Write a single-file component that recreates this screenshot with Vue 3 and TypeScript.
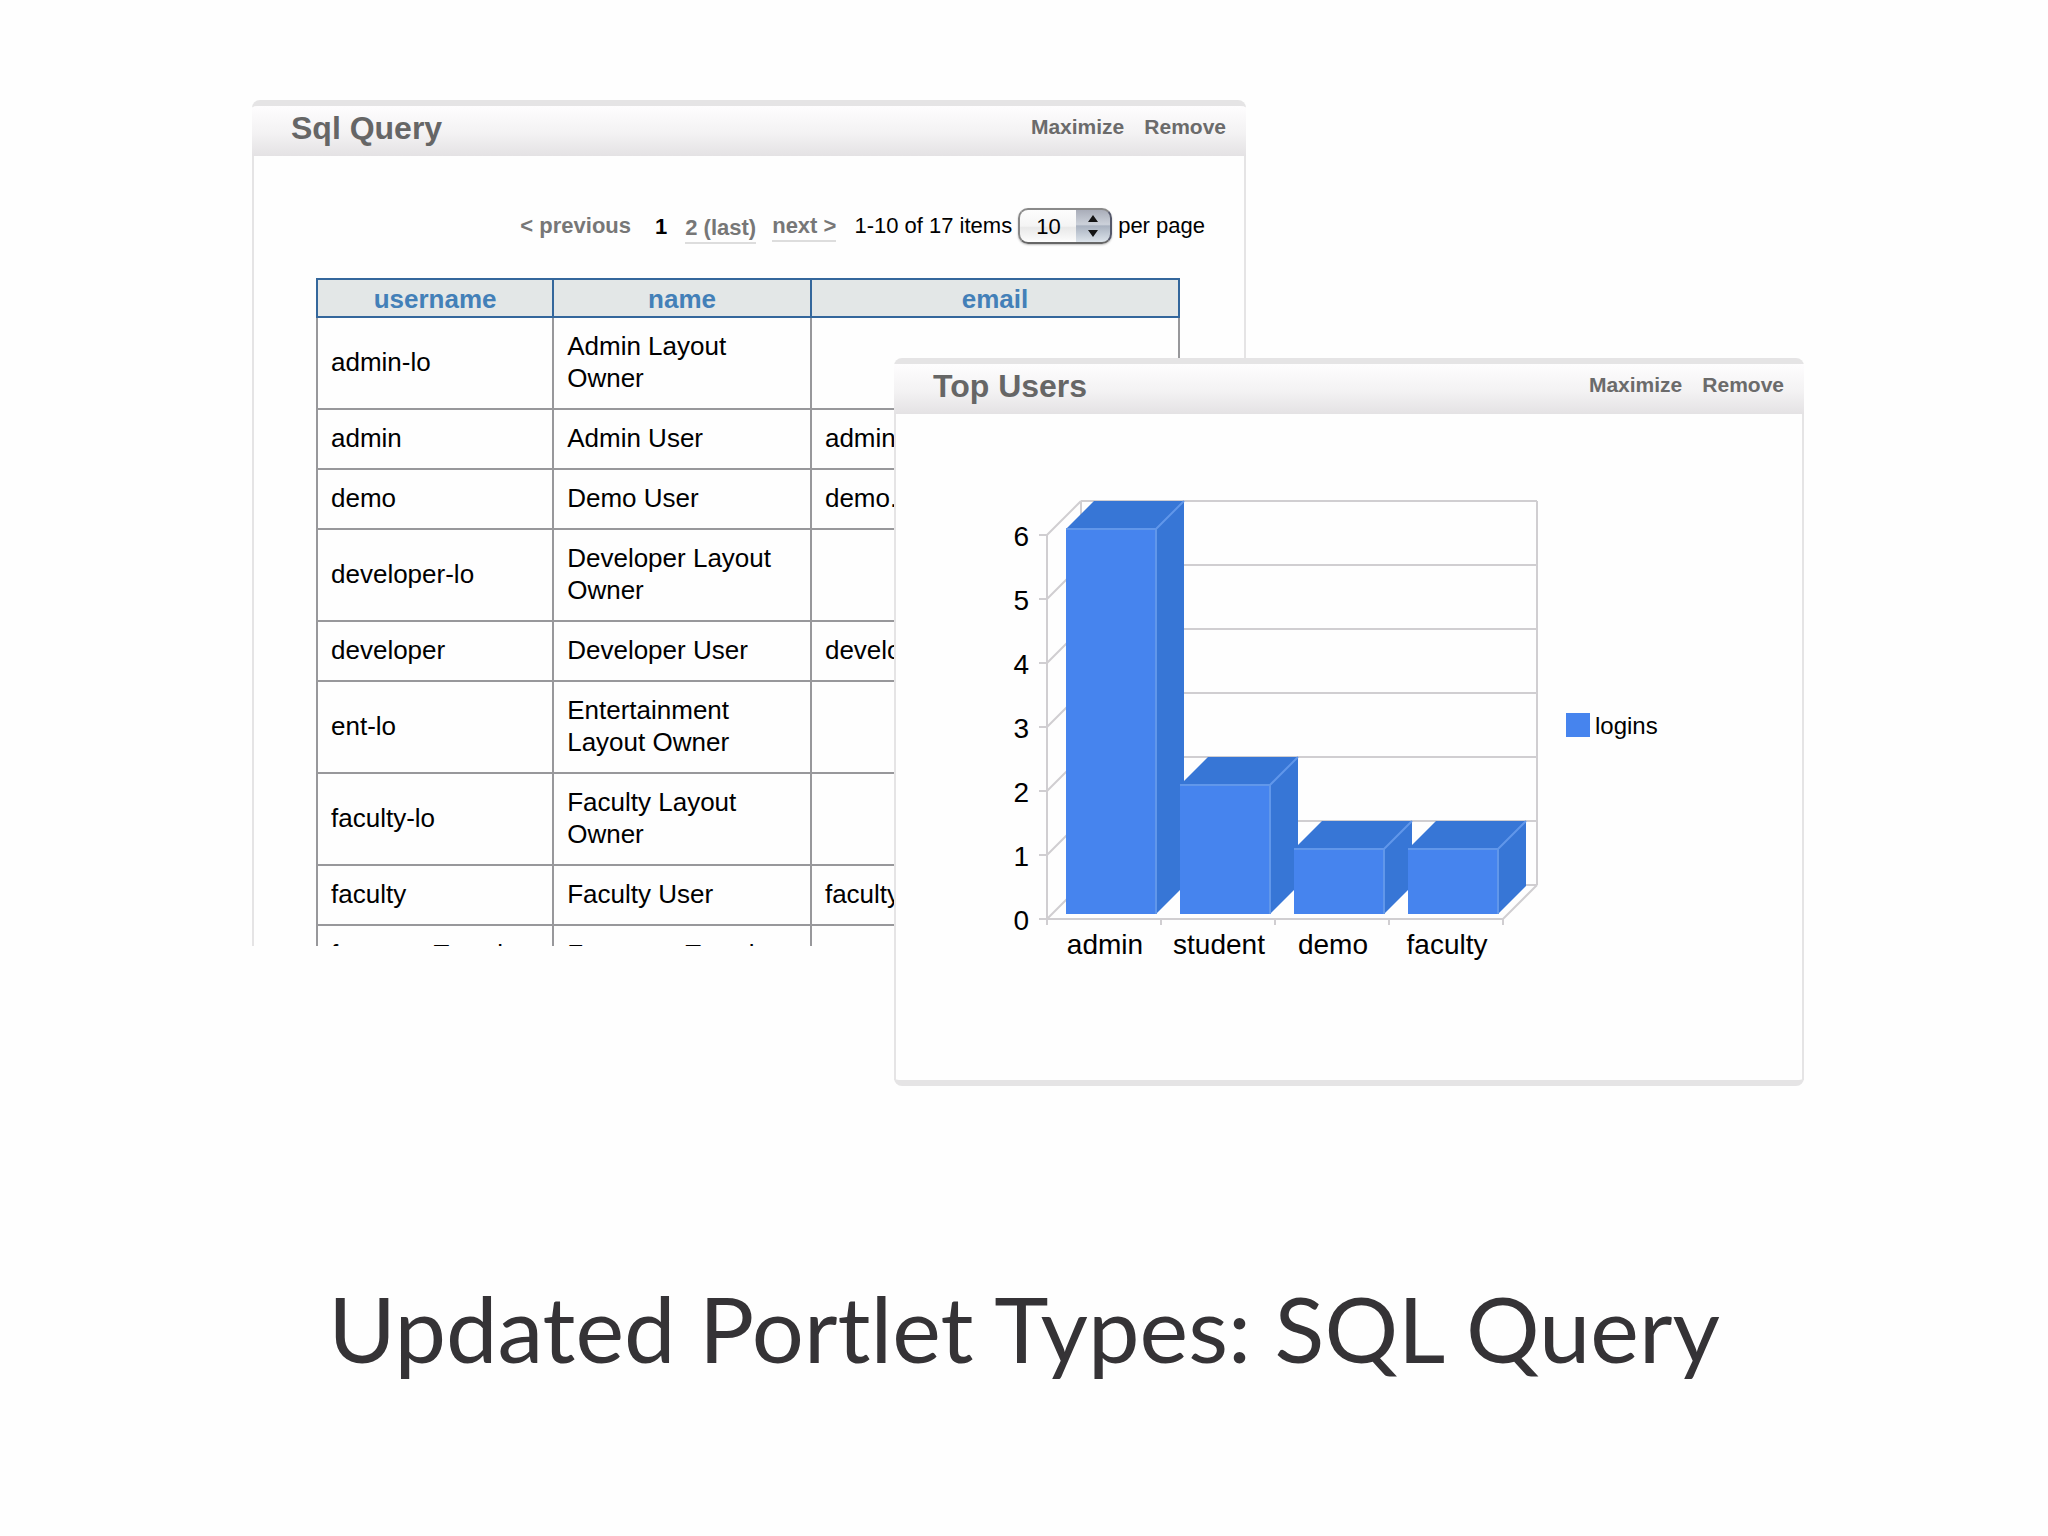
<script setup lang="ts">
import { ref } from 'vue'

interface UserRow {
  username: string
  name: string
  email: string
}

interface Bar {
  label: string
  value: number
}

const pageSize = ref<number>(10)

const rows: UserRow[] = [
  { username: 'admin-lo', name: 'Admin Layout Owner', email: '' },
  { username: 'admin', name: 'Admin User', email: 'admin' },
  { username: 'demo', name: 'Demo User', email: 'demo.' },
  { username: 'developer-lo', name: 'Developer Layout Owner', email: '' },
  { username: 'developer', name: 'Developer User', email: 'develo' },
  { username: 'ent-lo', name: 'Entertainment Layout Owner', email: '' },
  { username: 'faculty-lo', name: 'Faculty Layout Owner', email: '' },
  { username: 'faculty', name: 'Faculty User', email: 'faculty' },
  { username: 'fragmentTemplate', name: 'Fragment Template', email: '' },
]

const bars: Bar[] = [
  { label: 'admin', value: 6 },
  { label: 'student', value: 2 },
  { label: 'demo', value: 1 },
  { label: 'faculty', value: 1 },
]

// Chart geometry: the front plane sits 34 units left of and below the back wall.
const unit = 64
const zeroY = 423
const wallDepth = 34
const ticks = [0, 1, 2, 3, 4, 5, 6]
const slot = 114
const barWidth = 90
const barDepth = 28
const barBase = 418

const frontY = (v: number): number => zeroY - v * unit
const backY = (v: number): number => frontY(v) - wallDepth
const barX = (i: number): number => 52 + i * slot
const barTop = (v: number): number => barBase - 1 - v * unit

const topFace = (i: number, v: number): string => {
  const x = barX(i)
  const y = barTop(v)
  return `${x},${y} ${x + barDepth},${y - barDepth} ${x + barWidth + barDepth},${y - barDepth} ${x + barWidth},${y}`
}

const sideFace = (i: number, v: number): string => {
  const x = barX(i) + barWidth
  const y = barTop(v)
  return `${x},${y} ${x + barDepth},${y - barDepth} ${x + barDepth},${barBase - barDepth} ${x},${barBase}`
}
</script>

<template>
  <main class="slide">
    <div class="stage">
      <section class="portlet query">
        <header class="bar">
          <h2>Sql Query</h2>
          <nav class="actions">
            <a href="#">Maximize</a>
            <a href="#">Remove</a>
          </nav>
        </header>
        <div class="body query-body">
          <div class="pager">
            <a class="step previous">&lt; previous</a>
            <span class="pages">
              <span class="current">1</span>
              <a class="step linked" href="#">2 (last)</a>
            </span>
            <a class="step linked" href="#">next &gt;</a>
            <span class="size">
              <span>1-10 of 17 items</span>
              <span class="picker">
                <select id="page-size" v-model="pageSize">
                  <option :value="10">10</option>
                </select>
                <svg viewBox="0 0 34 32" aria-hidden="true">
                  <path d="M17 5l5 7h-10z M17 27l5-7h-10z" />
                </svg>
              </span>
              <label for="page-size">per page</label>
            </span>
          </div>
          <table>
            <colgroup>
              <col class="col-username" />
              <col class="col-name" />
              <col />
            </colgroup>
            <thead>
              <tr>
                <th>username</th>
                <th>name</th>
                <th>email</th>
              </tr>
            </thead>
            <tbody>
              <tr v-for="row in rows" :key="row.username">
                <td>{{ row.username }}</td>
                <td>{{ row.name }}</td>
                <td>{{ row.email }}</td>
              </tr>
            </tbody>
          </table>
        </div>
      </section>

      <section class="portlet top-users">
        <header class="bar">
          <h2>Top Users</h2>
          <nav class="actions">
            <a href="#">Maximize</a>
            <a href="#">Remove</a>
          </nav>
        </header>
        <div class="body chart-body">
          <svg class="chart" viewBox="-14 0 660 472" role="img">
            <g class="grid">
              <path v-for="t in ticks" :key="`b${t}`" :d="`M67 ${backY(t)}H523`" />
              <path d="M67 5V389 M523 5V389 M33 39V429" />
              <path d="M33 423H489L523 389" />
              <path v-for="t in ticks" :key="`f${t}`" :d="`M25 ${frontY(t)}H33L67 ${backY(t)}`" />
              <path v-for="n in 4" :key="`x${n}`" :d="`M${33 + n * slot} 423v6`" />
            </g>
            <g v-for="(bar, i) in bars" :key="bar.label">
              <polygon class="shade" :points="topFace(i, bar.value)" />
              <polygon class="shade" :points="sideFace(i, bar.value)" />
              <rect
                class="face"
                :x="barX(i)"
                :y="barTop(bar.value)"
                :width="barWidth"
                :height="barBase - barTop(bar.value)"
              />
              <path
                class="edge"
                :d="`M${barX(i)} ${barTop(bar.value)}h${barWidth}V${barBase} M${barX(i) + barWidth} ${barTop(bar.value)}l${barDepth} -${barDepth}`"
              />
            </g>
            <g class="value-labels">
              <text v-for="t in ticks" :key="t" x="15" :y="frontY(t) + 11">{{ t }}</text>
            </g>
            <g class="bar-labels">
              <text v-for="(bar, i) in bars" :key="bar.label" :x="91 + i * slot" y="458">{{ bar.label }}</text>
            </g>
            <rect class="face" x="552" y="217" width="24" height="24" />
            <text class="legend" x="581" y="238">logins</text>
          </svg>
        </div>
      </section>
    </div>

    <h1>Updated Portlet Types: SQL Query</h1>
  </main>
</template>

<style>
body {
  margin: 0;
  background: #fefefe;
}
</style>

<style scoped>
.slide {
  box-sizing: border-box;
  min-height: 100vh;
  padding-top: 100px;
  overflow: hidden;
  font-family: "Liberation Sans", Arial, sans-serif;
  color: #000;
}

.stage {
  display: grid;
  grid-template-columns: 252fr 642fr 352fr 558fr 244fr;
  grid-template-rows: 258px 588px auto;
}

.portlet {
  border-top: 6px solid #e5e4e5;
  border-radius: 8px 8px 0 0;
  background: #fefefe;
  min-width: 0;
}

.query {
  grid-column: 2 / 4;
  grid-row: 1 / 3;
  overflow: hidden;
}

.top-users {
  grid-column: 3 / 5;
  grid-row: 2 / 4;
  z-index: 1;
  border-bottom: 6px solid #e5e4e5;
  border-radius: 8px;
}

.bar {
  display: flex;
  justify-content: space-between;
  align-items: flex-start;
  height: 50px;
  padding: 0 20px 0 39px;
  background: linear-gradient(#fefdfe, #f3f2f3 55%, #e4e2e4);
}

.bar h2 {
  margin: 0;
  font-size: 32px;
  line-height: 44px;
  color: #666;
}

.actions {
  display: flex;
  gap: 20px;
}

.actions a {
  font-size: 21px;
  font-weight: bold;
  line-height: 42px;
  color: #6b6b6b;
  text-decoration: none;
}

.body {
  border: solid #e5e4e5;
  border-width: 0 2px;
}

.query-body {
  padding: 52px 39px 0 62px;
}

.pager {
  display: flex;
  justify-content: flex-end;
  align-items: center;
  gap: 16px;
  height: 36px;
  margin-bottom: 34px;
  font-size: 22px;
  line-height: 30px;
  white-space: nowrap;
}

.step {
  padding-top: 2px;
  border-bottom: 2px solid transparent;
  font-weight: bold;
  line-height: 28px;
  color: #777;
  text-decoration: none;
}

.previous {
  margin-right: 8px;
}

.linked {
  border-color: #ddd;
}

.pages {
  display: flex;
  gap: 18px;
  padding-top: 4px;
}

.current {
  font-weight: bold;
}

.size {
  display: flex;
  align-items: center;
  gap: 6px;
  margin-left: 2px;
}

.picker {
  position: relative;
  display: flex;
}

.picker select {
  appearance: none;
  box-sizing: border-box;
  width: 94px;
  height: 36px;
  padding: 0 0 0 16px;
  border: 2px solid;
  border-color: #8a8a8a #55586a #666 #888;
  border-radius: 10px;
  background:
    linear-gradient(#a9adb9, #ccd1da 45%, #a9b2c0 50%, #dce3ea) right / 34px 100% no-repeat,
    linear-gradient(#fdfdfd, #f4f4f4 50%, #e8e8e8 55%, #fdfdfd);
  box-shadow: 0 1px 2px #bbb;
  font: 22px "Liberation Sans", Arial, sans-serif;
  color: #000;
}

.picker svg {
  position: absolute;
  top: 2px;
  right: 2px;
  width: 34px;
  height: 32px;
  fill: #151515;
  pointer-events: none;
}

table {
  width: calc(100% - 25px);
  border-collapse: collapse;
  table-layout: fixed;
  font-size: 26px;
  line-height: 32px;
}

.col-username {
  width: 27.4%;
}

.col-name {
  width: 29.9%;
}

th {
  padding: 3px 2px 1px;
  border: 2px solid #34679c;
  background: #e3e7e7;
  color: #4380b8;
}

td {
  padding: 12px 13px 14px;
  border: 2px solid #98989b;
}

.chart-body {
  padding: 82px 0 112px 104px;
}

.chart {
  display: block;
  width: 660px;
  max-width: 100%;
}

.grid {
  fill: none;
  stroke: #d0ced1;
  stroke-width: 2;
}

.face {
  fill: #4684ee;
}

.shade {
  fill: #3776d6;
}

.edge {
  fill: none;
  stroke: #6197ea;
  stroke-width: 2;
}

.value-labels {
  font-size: 28px;
  text-anchor: end;
}

.bar-labels {
  font-size: 28px;
  text-anchor: middle;
}

.legend {
  font-size: 24px;
}

h1 {
  margin: 186px 0 0;
  font: 92px/112px Lato, "Open Sans", sans-serif;
  color: #353336;
  text-align: center;
}
</style>
